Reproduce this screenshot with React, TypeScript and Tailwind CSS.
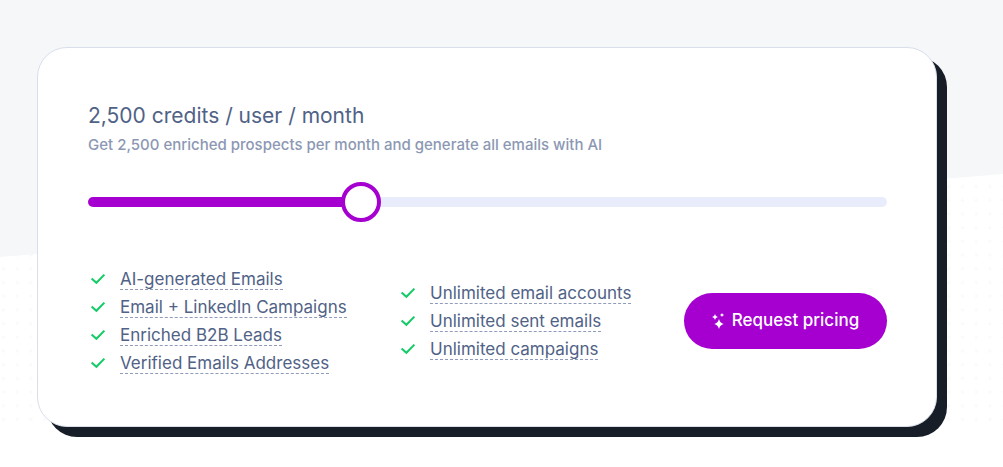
import { useState } from 'react'

const plans = [
  { credits: '1,000' },
  { credits: '2,500' },
  { credits: '5,000' },
  { credits: '10,000' },
]

const outreachFeatures = [
  'AI-generated Emails',
  'Email + LinkedIn Campaigns',
  'Enriched B2B Leads',
  'Verified Emails Addresses',
]

const unlimitedFeatures = ['Unlimited email accounts', 'Unlimited sent emails', 'Unlimited campaigns']

function CheckIcon() {
  return (
    <svg className="h-5 w-5 shrink-0" viewBox="0 0 20 20" fill="none" aria-hidden="true">
      <path d="M3.6 9.4 8.4 13.8 16.4 5.6" stroke="#12cc67" strokeWidth="2" />
    </svg>
  )
}

function SparklesIcon() {
  return (
    <svg className="h-4 w-3 shrink-0" viewBox="0 0 12 16" fill="currentColor" aria-hidden="true">
      <path d="M7 6C8 9.2 8.9 10.1 12 11 8.9 11.9 8 12.8 7 16 6 12.8 5.1 11.9 2 11 5.1 10.1 6 9.2 7 6Z" />
      <path d="M3 1C3.7 2.8 4.2 3.3 6 4 4.2 4.7 3.7 5.2 3 7 2.3 5.2 1.8 4.7 0 4 1.8 3.3 2.3 2.8 3 1Z" />
      <path d="M10 0C10.6 1.2 10.8 1.4 12 2 10.8 2.6 10.6 2.8 10 4 9.4 2.8 9.2 2.6 8 2 9.2 1.4 9.4 1.2 10 0Z" />
    </svg>
  )
}

function FeatureList({ items }: { items: string[] }) {
  return (
    <ul>
      {items.map((item) => (
        <li key={item} className="flex h-7 items-center gap-3">
          <CheckIcon />
          <span className="border-b border-dashed border-[#8f9bb8] text-[17px] leading-5 whitespace-nowrap text-[#506286]">
            {item}
          </span>
        </li>
      ))}
    </ul>
  )
}

function Backdrop() {
  return (
    <svg className="absolute inset-0 h-full w-full" aria-hidden="true">
      <defs>
        <pattern id="plus" x="-3" y="2" width="13.7" height="13.7" patternUnits="userSpaceOnUse">
          <path d="M6.5 4.5v4M4.5 6.5h4" stroke="#f8f9fa" strokeWidth="1" />
        </pattern>
      </defs>
      <rect width="100%" height="430" fill="url(#plus)" />
      <svg width="100%" height="258" viewBox="0 0 1003 258" preserveAspectRatio="none">
        <path d="M0 0H1003V174L0 257Z" fill="#f6f7f9" />
      </svg>
    </svg>
  )
}

export default function App() {
  const [step, setStep] = useState(1)
  const { credits } = plans[step]
  const ratio = step / (plans.length - 1)
  const fill = `calc(20px + (100% - 40px) * ${ratio})`

  return (
    <main className="relative min-h-screen bg-white pt-[47px] pr-[66px] pb-10 pl-[37px] font-['Inter',sans-serif]">
      <Backdrop />
      <section className="relative rounded-[30px] border border-[#d8deea] bg-white pt-[50px] pr-[49px] pb-[49px] pl-[50px] shadow-[10px_10px_0_#171e28]">
        <h2 className="text-[21px] leading-9 text-[#506286]">{credits} credits / user / month</h2>
        <label htmlFor="credits" className="block text-[15px] leading-[22px] font-medium text-[#8c98b3]">
          Get {credits} enriched prospects per month and generate all emails with AI
        </label>

        <input
          id="credits"
          type="range"
          min={0}
          max={plans.length - 1}
          value={step}
          onChange={(e) => setStep(Number(e.target.value))}
          className="mt-[26px] block h-10 w-full cursor-pointer appearance-none bg-transparent [&::-webkit-slider-runnable-track]:h-[10px] [&::-webkit-slider-runnable-track]:rounded-full [&::-webkit-slider-runnable-track]:bg-[linear-gradient(to_right,#a600d1_var(--fill),#e9edfb_var(--fill))] [&::-webkit-slider-thumb]:-mt-[15px] [&::-webkit-slider-thumb]:h-10 [&::-webkit-slider-thumb]:w-10 [&::-webkit-slider-thumb]:appearance-none [&::-webkit-slider-thumb]:rounded-full [&::-webkit-slider-thumb]:border-4 [&::-webkit-slider-thumb]:border-[#a600d1] [&::-webkit-slider-thumb]:bg-white"
          style={{ '--fill': fill } as React.CSSProperties}
        />

        <div className="mt-[43px] grid grid-cols-[260px_1fr_auto] items-center gap-x-[50px]">
          <FeatureList items={outreachFeatures} />
          <FeatureList items={unlimitedFeatures} />
          <button
            type="button"
            className="flex h-14 w-[203px] cursor-pointer items-center justify-center gap-2 rounded-full bg-[#a600d1] text-[17px] font-medium whitespace-nowrap text-white"
          >
            <SparklesIcon />
            Request pricing
          </button>
        </div>
      </section>
    </main>
  )
}
